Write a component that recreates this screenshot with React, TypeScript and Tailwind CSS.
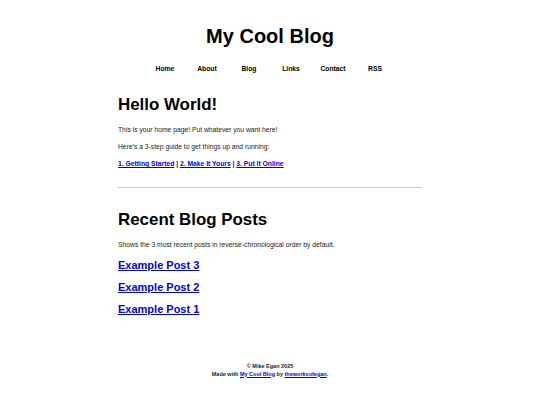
export default function App() {
  return (
    <div className="min-h-[405px] bg-white text-black font-['Liberation_Sans',Arial,sans-serif]">
      <header className="pt-[24px] text-center">
        <h1 className="text-[20px] leading-[24px] font-bold">My Cool Blog</h1>
        <nav className="mt-[17px] flex justify-center">
          {["Home", "About", "Blog", "Links", "Contact", "RSS"].map((item) => (
            <a key={item} href="#" className="w-[42px] text-center text-[6.75px] leading-[8px] font-bold text-black no-underline">
              {item}
            </a>
          ))}
        </nav>
      </header>

      <main className="mx-auto w-[304px]">
        <section>
          <h2 className="mt-[22px] text-[16.9px] leading-[20px] font-bold">Hello World!</h2>
          <p className="mt-[11px] text-[6.75px] leading-[8px] text-[#222]">This is your home page! Put whatever you want here!</p>
          <p className="mt-[9px] text-[6.75px] leading-[8px] text-[#222]">Here's a 3-step guide to get things up and running:</p>
          <p className="mt-[9px] text-[6.75px] leading-[8px] font-bold text-[#222]">
            <a href="#" className="text-[#0000ee] underline">1. Getting Started</a> |{" "}
            <a href="#" className="text-[#0000ee] underline">2. Make It Yours</a> |{" "}
            <a href="#" className="text-[#0000ee] underline">3. Put It Online</a>
          </p>
        </section>

        <hr className="mt-[19px] border-0 border-t border-[#cccccc]" />

        <section>
          <h2 className="mt-[22px] text-[16.9px] leading-[20px] font-bold">Recent Blog Posts</h2>
          <p className="mt-[10.5px] text-[6.75px] leading-[8px] text-[#222]">
            Shows the 3 most recent posts in reverse-chronological order by default.
          </p>
          <ul className="mt-[10px] flex flex-col gap-[9px]">
            {["Example Post 3", "Example Post 2", "Example Post 1"].map((post) => (
              <li key={post} className="text-[11px] leading-[13px] font-bold">
                <a href="#" className="text-[#0000ee] underline">{post}</a>
              </li>
            ))}
          </ul>
        </section>
      </main>

      <footer className="mt-[46px] pb-[20px] text-center text-[5.5px] leading-[8px] font-bold text-[#222]">
        <p>© Mike Egan 2025</p>
        <p>
          Made with <a href="#" className="text-[#0000ee] underline">My Cool Blog</a> by{" "}
          <a href="#" className="text-[#0000ee] underline">theworksofegan</a>.
        </p>
      </footer>
    </div>
  );
}
